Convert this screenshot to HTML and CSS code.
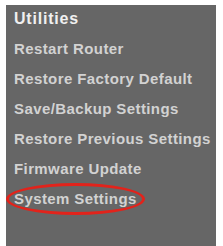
FILE: index.html
```html
<!DOCTYPE html>
<html lang="en">
<head>
    <meta charset="UTF-8">
    <meta name="viewport" content="width=device-width, initial-scale=1.0">
    <title>Utilities</title>
    <link rel="stylesheet" href="styles.css">
</head>
<body>
    <div id="menu">
        <h3>Utilities</h3>
        <ul>
            <li>Restart Router</li>
            <li>Restore Factory Default</li>
            <li>Save/Backup Settings</li>
            <li>Restore Previous Settings</li>
            <li>Firmware Update</li>
            <li class="marcado">System Settings</li>
        </ul>
    </div>
</body>
</html>
```
FILE: styles.css
```css
body{
    margin: 0;
    background-color: white;
    font-family: "Liberation Sans", Arial, sans-serif;
}
#menu{
    margin: 5px 7px 0 6px;
    height: 241px;
    background-color: #666666;
    padding: 4px 0 0 8px;
    box-sizing: border-box;
}
#menu h3{
    margin: 0;
    font-size: 16px;
    letter-spacing: 0.8px;
    color: #f0f0f0;
    line-height: 20px;
}
#menu ul{
    list-style: none;
    margin: 5px 0 0 0;
    padding: 0;
}
#menu li{
    font-size: 15px;
    font-weight: bold;
    color: #d2d2d2;
    line-height: 30px;
    letter-spacing: 0.4px;
}
.marcado{
    position: relative;
}
.marcado::after{
    content: "";
    position: absolute;
    left: -8px;
    top: -1px;
    width: 139px;
    height: 32px;
    box-sizing: border-box;
    border: 3px solid #e2231b;
    border-radius: 50%;
}
```
